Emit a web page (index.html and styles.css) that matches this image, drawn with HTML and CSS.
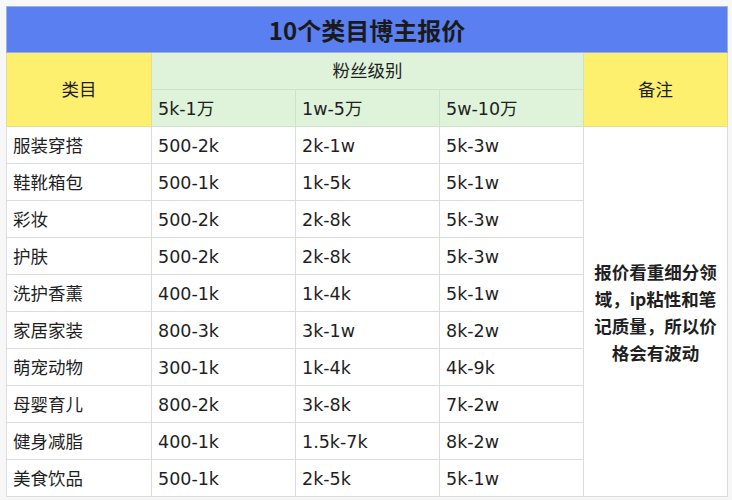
FILE: index.html
```html
<!DOCTYPE html>
<html lang="zh">
<head>
<meta charset="utf-8">
<title>10个类目博主报价</title>
<link rel="stylesheet" href="styles.css">
</head>
<body>
<div class="sheet">
<table class="price">
  <colgroup>
    <col class="c1"><col class="c2"><col class="c3"><col class="c4"><col class="c5">
  </colgroup>
  <tr class="title-row"><th colspan="5" class="title">10个类目博主报价</th></tr>
  <tr class="head-row">
    <th rowspan="2" class="yellow">类目</th>
    <th colspan="3" class="green center">粉丝级别</th>
    <th rowspan="2" class="yellow">备注</th>
  </tr>
  <tr class="head-row">
    <th class="green left">5k-1万</th>
    <th class="green left">1w-5万</th>
    <th class="green left">5w-10万</th>
  </tr>
  <tr><td>服装穿搭</td><td>500-2k</td><td>2k-1w</td><td>5k-3w</td>
    <td rowspan="10" class="note">报价看重细分领域，ip粘性和笔记质量，所以价格会有波动</td></tr>
  <tr><td>鞋靴箱包</td><td>500-1k</td><td>1k-5k</td><td>5k-1w</td></tr>
  <tr><td>彩妆</td><td>500-2k</td><td>2k-8k</td><td>5k-3w</td></tr>
  <tr><td>护肤</td><td>500-2k</td><td>2k-8k</td><td>5k-3w</td></tr>
  <tr><td>洗护香薰</td><td>400-1k</td><td>1k-4k</td><td>5k-1w</td></tr>
  <tr><td>家居家装</td><td>800-3k</td><td>3k-1w</td><td>8k-2w</td></tr>
  <tr><td>萌宠动物</td><td>300-1k</td><td>1k-4k</td><td>4k-9k</td></tr>
  <tr><td>母婴育儿</td><td>800-2k</td><td>3k-8k</td><td>7k-2w</td></tr>
  <tr><td>健身减脂</td><td>400-1k</td><td>1.5k-7k</td><td>8k-2w</td></tr>
  <tr><td>美食饮品</td><td>500-1k</td><td>2k-5k</td><td>5k-1w</td></tr>
</table>
</div>
</body>
</html>
```
FILE: styles.css
```css
html, body {
  margin: 0;
  padding: 0;
  background: #f6f6f6;
}
body {
  width: 732px;
  height: 500px;
  overflow: hidden;
  font-family: "DejaVu Sans", "Noto Sans CJK SC", sans-serif;
  color: #1f1f1f;
}
.sheet {
  padding: 6px 0 0 6px;
  background-color: #f7f7f7;
  background-image:
    linear-gradient(to right, transparent 144px, #dedede 144px, #dedede 145px, transparent 145px);
  background-size: 144px 100%;
  background-position: 6px 0;
}
.price {
  border-collapse: collapse;
  table-layout: fixed;
  width: 721px;
  background: #ffffff;
}
.c1 { width: 145px; }
.c2, .c3, .c4, .c5 { width: 144px; }
.price th, .price td {
  border: 1px solid #dcdcdc;
  padding: 0 6px;
  font-size: 17.5px;
  font-weight: 400;
  line-height: 24px;
  white-space: nowrap;
  overflow: hidden;
}
.price tr { height: 37px; }
.price td { text-align: left; padding-top: 2px; }
.price tr.title-row { height: 46px; }
.price th.title {
  background: #5a7ff1;
  font-family: "Noto Sans CJK SC", sans-serif;
  font-size: 24px;
  font-weight: 700;
  color: #1a1a1a;
  text-align: center;
  border-color: #9fb0e0;
}
.price th.yellow {
  background: #fef06f;
  text-align: center;
  border-color: #e6dc9a;
}
.price th.green {
  background: #def3da;
  border-color: #cfe3cb;
}
.price th.center { text-align: center; }
.price th.left { text-align: left; padding-top: 2px; }
.price td.note {
  white-space: normal;
  text-align: center;
  font-family: "Noto Sans CJK SC", sans-serif;
  font-size: 17.5px;
  font-weight: 600;
  line-height: 27px;
  padding: 0 6px;
  vertical-align: middle;
}
```
